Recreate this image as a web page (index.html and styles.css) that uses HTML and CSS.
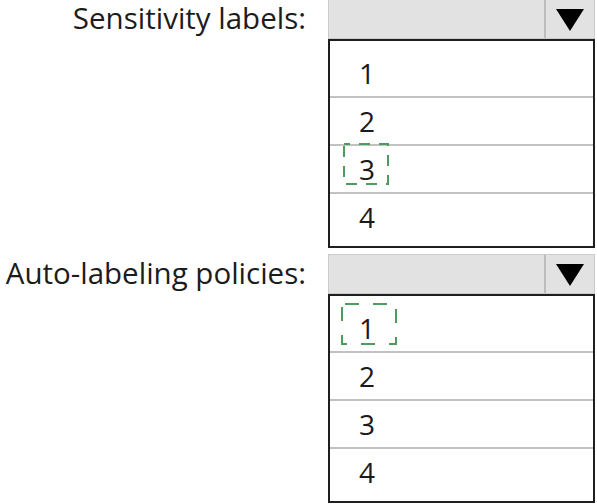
FILE: index.html
```html
<!DOCTYPE html>
<html>
<head>
<meta charset="utf-8">
<link rel="stylesheet" href="styles.css">
</head>
<body>
<div class="form">
  <div class="label">Sensitivity labels:</div>
  <div class="select first">
    <div class="value"></div>
    <div class="button"><svg width="28" height="22" viewBox="0 0 28 22"><polygon points="0,0 28,0 14,22" fill="#000"/></svg></div>
  </div>
  <div class="spacer"></div>
  <div class="list">
    <div class="item">1</div>
    <div class="item">2</div>
    <div class="item"><span class="mark mark-a"><svg width="46" height="42" viewBox="0 0 46 42"><rect x="1" y="1" width="44" height="40" fill="none" stroke="#4f9b5e" stroke-width="2" stroke-dasharray="11 9" stroke-dashoffset="5"/></svg></span>3</div>
    <div class="item">4</div>
  </div>

  <div class="label second">Auto-labeling policies:</div>
  <div class="select second">
    <div class="value"></div>
    <div class="button"><svg width="28" height="22" viewBox="0 0 28 22"><polygon points="0,0 28,0 14,22" fill="#000"/></svg></div>
  </div>
  <div class="spacer"></div>
  <div class="list">
    <div class="item"><span class="mark mark-b"><svg width="56" height="42" viewBox="0 0 56 42"><rect x="1" y="1" width="54" height="40" fill="none" stroke="#4f9b5e" stroke-width="2" stroke-dasharray="14 14" stroke-dashoffset="-3"/></svg></span>1</div>
    <div class="item">2</div>
    <div class="item">3</div>
    <div class="item">4</div>
  </div>
</div>
</body>
</html>
```
FILE: styles.css
```css
html, body {
  margin: 0;
  padding: 0;
  background: #ffffff;
}
body {
  font-family: "Open Sans", "Noto Sans", sans-serif;
  color: #1a1a1a;
  width: 597px;
  height: 504px;
  overflow: hidden;
}
.form {
  display: grid;
  grid-template-columns: 306px 267px;
  column-gap: 22px;
}
.label {
  font-size: 29.5px;
  line-height: 35px;
  text-align: right;
  white-space: nowrap;
  color: #1c1c1c;
}
.label.second {
  padding-top: 1px;
}
.second {
  margin-top: 6px;
}
.select {
  height: 40px;
  box-sizing: border-box;
  background: #e2e2e2;
  border: 1px solid #cbcbcb;
  display: flex;
}
.select.first {
  height: 39px;
  border-top: none;
}
.value {
  flex: 1;
}
.button {
  width: 48px;
  border-left: 2px solid #bdbdbd;
  display: flex;
  align-items: center;
  justify-content: center;
  padding-top: 1px;
}
.button svg {
  display: block;
}
.list {
  border: 2px solid #1e1e1e;
  padding: 9px 0 6px;
  box-sizing: border-box;
}
.item {
  position: relative;
  height: 46px;
  line-height: 46px;
  font-size: 28px;
  padding-left: 29px;
  border-bottom: 2px solid #c2c2c2;
  color: #1a1a1a;
}
.item:last-child {
  border-bottom: none;
}
.mark {
  position: absolute;
  line-height: 0;
}
.mark-a {
  left: 13px;
  top: -3px;
}
.mark-b {
  left: 11px;
  top: -2px;
}
```
